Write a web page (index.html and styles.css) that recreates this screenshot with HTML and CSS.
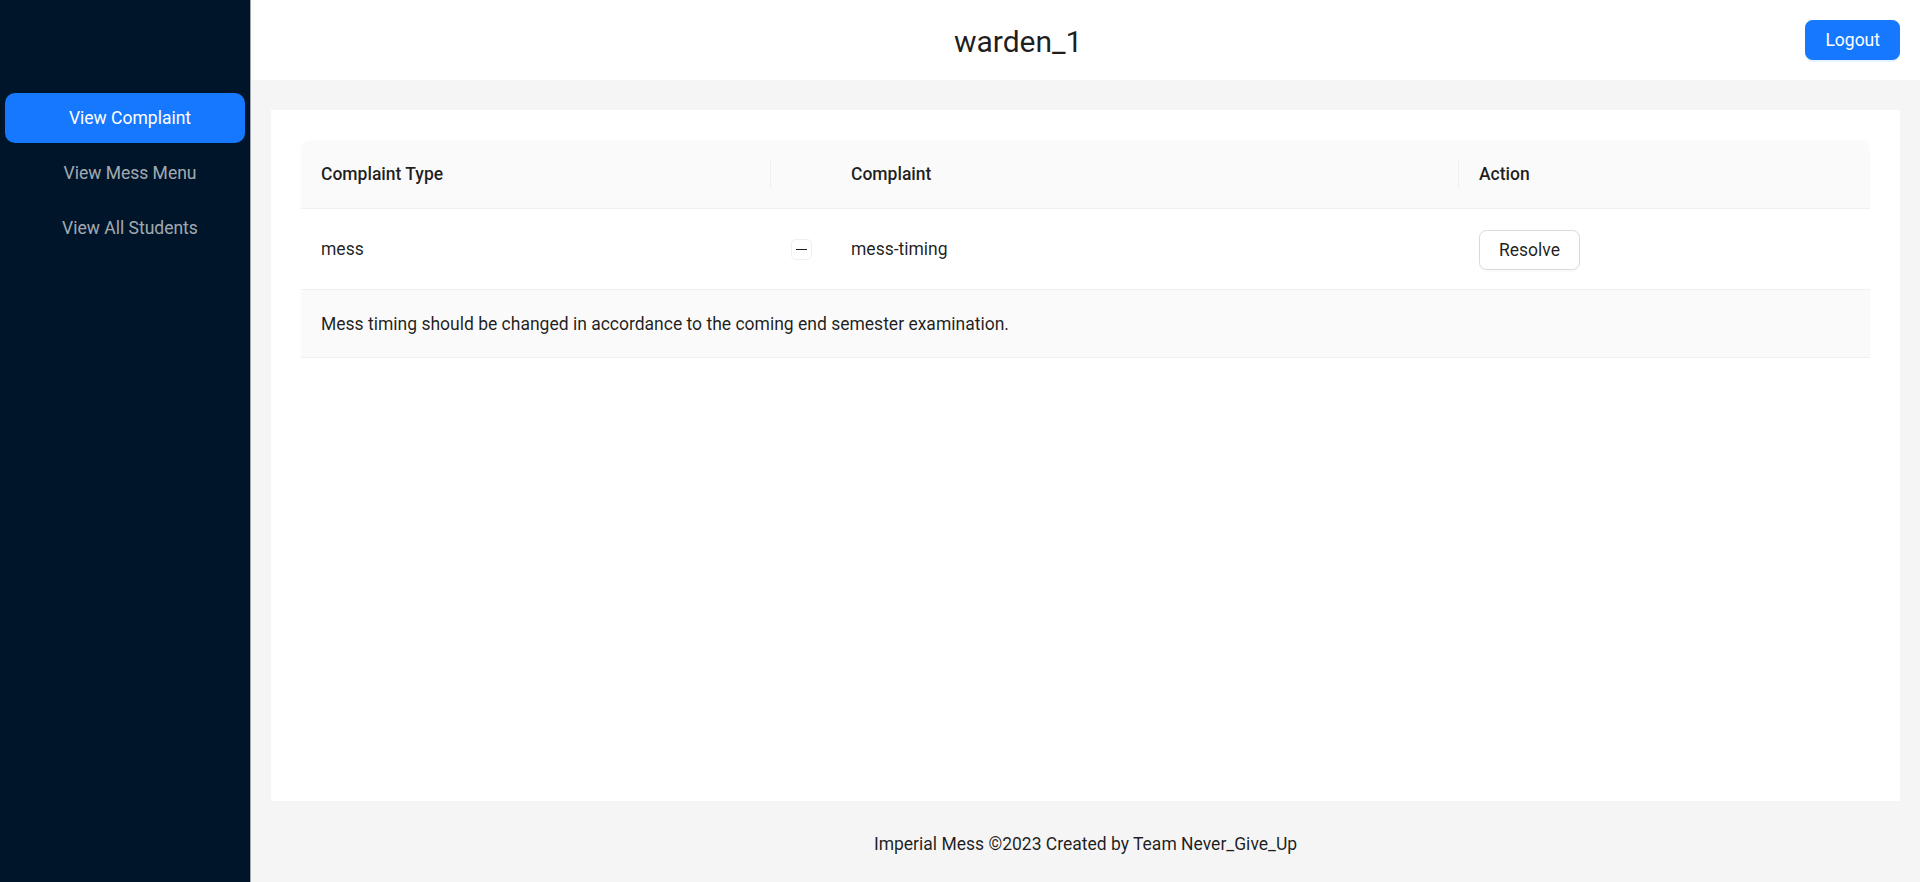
FILE: index.html
```html
<!DOCTYPE html>
<html lang="en">
<head>
<meta charset="utf-8">
<title>Warden</title>
<link rel="stylesheet" href="styles.css">
</head>
<body>
<div class="layout">
  <aside class="sider">
    <ul class="menu">
      <li class="menu-item selected">View Complaint</li>
      <li class="menu-item">View Mess Menu</li>
      <li class="menu-item">View All Students</li>
    </ul>
  </aside>
  <div class="main">
    <header class="header">
      <h1 class="title">warden_1</h1>
      <button class="btn btn-primary">Logout</button>
    </header>
    <main class="content">
      <div class="card">
        <table class="table">
          <colgroup>
            <col class="col-type">
            <col class="col-expand">
            <col class="col-complaint">
            <col>
          </colgroup>
          <thead>
            <tr>
              <th class="th-sep">Complaint Type</th>
              <th class="th-expand"></th>
              <th class="th-sep">Complaint</th>
              <th>Action</th>
            </tr>
          </thead>
          <tbody>
            <tr>
              <td>mess</td>
              <td class="td-expand"><span class="expand-icon"></span></td>
              <td>mess-timing</td>
              <td><button class="btn btn-default">Resolve</button></td>
            </tr>
            <tr class="expanded-row">
              <td colspan="4">Mess timing should be changed in accordance to the coming end semester examination.</td>
            </tr>
          </tbody>
        </table>
      </div>
    </main>
    <footer class="footer">Imperial Mess ©2023 Created by Team Never_Give_Up</footer>
  </div>
</div>
</body>
</html>
```

FILE: styles.css
```css
* { box-sizing: border-box; }
html, body { margin: 0; padding: 0; }
body {
  font-family: "Roboto", "Lato", sans-serif;
  font-size: 17.5px;
  line-height: 27.5px;
  color: rgba(0, 0, 0, 0.88);
}
.layout {
  display: flex;
  height: 100vh;
  overflow: hidden;
}
.sider {
  width: 251px;
  flex: none;
  background: #001529;
  border-right: 1px solid #a0a6ad;
}
.menu {
  list-style: none;
  margin: 0;
  padding: 88px 0 0;
}
.menu-item {
  height: 50px;
  line-height: 50px;
  margin: 5px 5px;
  padding: 0 20px 0 30px;
  text-align: center;
  border-radius: 10px;
  color: rgba(255, 255, 255, 0.65);
  white-space: nowrap;
}
.menu-item.selected {
  background: #1677ff;
  color: #fff;
}
.main {
  flex: 1;
  min-width: 0;
  display: flex;
  flex-direction: column;
  background: #f5f5f5;
}
.header {
  height: 80px;
  flex: none;
  background: #fff;
  display: flex;
  align-items: center;
  padding: 0 20px 0 0;
}
.title {
  flex: 1;
  margin: 0 20px 0 0;
  padding-top: 4px;
  text-align: center;
  font-size: 30px;
  font-weight: 400;
  line-height: 40px;
}
.btn {
  font-family: inherit;
  font-size: 17.5px;
  height: 40px;
  padding: 0 19px;
  border-radius: 7.5px;
  cursor: pointer;
  line-height: 38px;
}
.btn-primary {
  background: #1677ff;
  color: #fff;
  border: 1px solid #1677ff;
  box-shadow: 0 2px 0 rgba(5, 145, 255, 0.1);
}
.btn-default {
  background: #fff;
  color: rgba(0, 0, 0, 0.88);
  border: 1px solid #d9d9d9;
  box-shadow: 0 2px 0 rgba(0, 0, 0, 0.02);
}
.content {
  flex: 1;
  display: flex;
  padding: 30px 20px 0;
  min-height: 0;
}
.card {
  flex: 1;
  background: #fff;
  padding: 30px;
}
.footer {
  flex: none;
  padding: 30px 0 24px;
  text-align: center;
}
.table {
  width: 100%;
  border-collapse: separate;
  border-spacing: 0;
  table-layout: fixed;
}
.col-type { width: 470px; }
.col-expand { width: 60px; }
.col-complaint { width: 628px; }
.table th {
  position: relative;
  background: #fafafa;
  padding: 21px 20px 19px;
  text-align: left;
  font-weight: 500;
  border-bottom: 1px solid #f0f0f0;
}
.table th:first-child { border-top-left-radius: 10px; }
.table th:last-child { border-top-right-radius: 10px; }
.table th.th-sep::after {
  content: "";
  position: absolute;
  right: 0;
  top: 50%;
  width: 1px;
  height: 28px;
  transform: translateY(-50%);
  background: #f0f0f0;
}
.table td {
  padding: 21px 20px 19px;
  border-bottom: 1px solid #f0f0f0;
  vertical-align: middle;
}
.table td.td-expand {
  text-align: center;
  padding: 20px 10px;
}
.expand-icon {
  display: inline-block;
  position: relative;
  width: 21px;
  height: 21px;
  border: 1px solid #f0f0f0;
  border-radius: 5px;
  background: #fff;
  vertical-align: middle;
}
.expand-icon::before {
  content: "";
  position: absolute;
  left: 4px;
  right: 4px;
  top: 9px;
  height: 1px;
  background: rgba(0, 0, 0, 0.88);
}
.expanded-row td {
  background: #fafafa;
}
```
